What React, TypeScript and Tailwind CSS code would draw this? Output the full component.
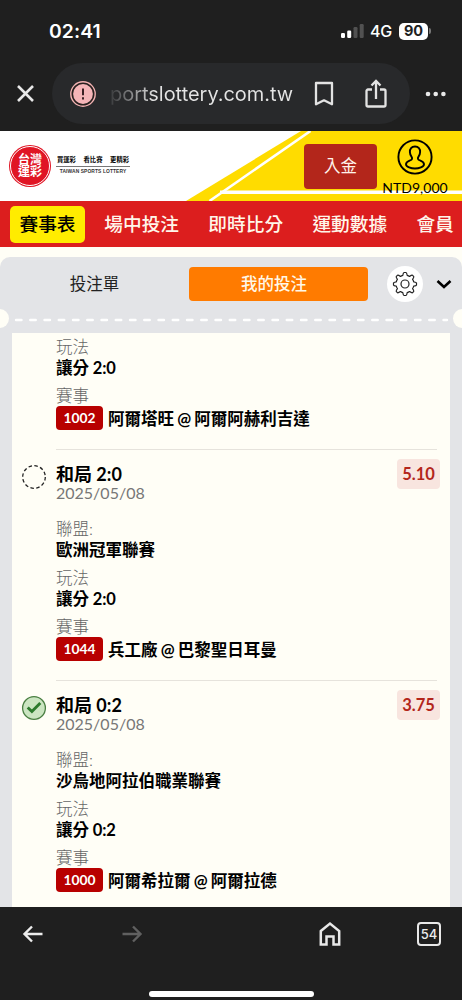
import React from "react";

type Bet = {
	id: string;
	pick?: string;
	date?: string;
	league?: string;
	handicap: string;
	match: string;
	odds?: string;
	won?: boolean;
};

const bets: Bet[] = [
	{ id: "1002", handicap: "讓分 2:0", match: "阿爾塔旺 @ 阿爾阿赫利吉達" },
	{
		id: "1044",
		pick: "和局 2:0",
		date: "2025/05/08",
		league: "歐洲冠軍聯賽",
		handicap: "讓分 2:0",
		match: "兵工廠 @ 巴黎聖日耳曼",
		odds: "5.10",
	},
	{
		id: "1000",
		pick: "和局 0:2",
		date: "2025/05/08",
		league: "沙烏地阿拉伯職業聯賽",
		handicap: "讓分 0:2",
		match: "阿爾希拉爾 @ 阿爾拉德",
		odds: "3.75",
		won: true,
	},
];

const navItems = ["場中投注", "即時比分", "運動數據", "會員"];

function StatusBar() {
	return (
		<div className="flex h-[62px] shrink-0 items-center justify-between pl-[49px] pr-[31px] font-['Inter','Liberation_Sans',sans-serif] text-white">
			<span className="pt-px text-[19.3px] font-semibold leading-none tracking-[0.1px]">02:41</span>
			<div className="flex items-center">
				<svg width="24" height="16" viewBox="0 0 24 16">
					<rect x="0" y="10" width="4" height="5" rx="1.2" fill="#fff" />
					<rect x="6.2" y="7.5" width="4" height="7.5" rx="1.2" fill="#fff" />
					<rect x="12.5" y="4" width="4" height="11" rx="1.2" fill="#515151" />
					<rect x="18.7" y="1" width="4" height="14" rx="1.2" fill="#515151" />
				</svg>
				<span className="ml-[5px] w-[22px] text-[16px] font-medium leading-none tracking-[-0.3px]">4G</span>
				<span className="ml-[7px] flex h-[17px] w-[29px] items-center justify-center rounded-[5px] bg-white text-[14.5px] font-bold leading-none text-[#1f1f1f]">
					90
				</span>
				<span className="ml-px h-[6px] w-[2px] rounded-r-full bg-[#777]" />
			</div>
		</div>
	);
}

function AddressBar() {
	return (
		<div className="flex h-[69px] shrink-0 items-start">
			<svg className="ml-[16px] mt-[22px]" width="19" height="19" viewBox="0 0 19 19" stroke="#e8e8e8" strokeWidth="2.6">
				<path d="M2 2l15 15M17 2L2 17" />
			</svg>
			<div className="ml-[17px] mt-px flex h-[61px] w-[358px] items-center rounded-full bg-[#28292b]">
				<svg className="ml-[18px]" width="26" height="26" viewBox="0 0 26 26">
					<circle cx="13" cy="13" r="12.2" fill="#28201f" stroke="#f3b3b3" strokeWidth="1.4" />
					<circle cx="13" cy="13" r="9.9" fill="#f5b5b8" />
					<path d="M13 7.5v6.7M13 16.3v2.2" stroke="#3a2023" strokeWidth="2" />
				</svg>
				<span className="ml-[14px] w-[185px] whitespace-nowrap bg-gradient-to-r from-[#3a3b3d] via-[#e4e4e4] via-[24%] to-[#e4e4e4] bg-clip-text font-['Inter','Liberation_Sans',sans-serif] text-[20px] leading-[28px] tracking-[-0.03px] text-transparent">
					portslottery.com.tw
				</span>
				<svg className="ml-[19px]" width="20" height="26" viewBox="0 0 20 26" fill="none" stroke="#e3e3e3" strokeWidth="2.3">
					<path d="M2 2h16v21.3l-8-4-8 4z" strokeLinejoin="round" />
				</svg>
				<svg className="ml-[31px]" width="22" height="30" viewBox="0 0 22 30" fill="none" stroke="#e3e3e3" strokeWidth="2.3">
					<path d="M7 10.5H3a1.5 1.5 0 0 0-1.5 1.5v14A1.5 1.5 0 0 0 3 27.5h16a1.5 1.5 0 0 0 1.5-1.5V12a1.5 1.5 0 0 0-1.5-1.5h-4M11 20V2.5M6.5 6.5L11 2l4.5 4.5" />
				</svg>
			</div>
			<svg className="ml-[15px] mt-[29px]" width="21" height="6" viewBox="0 0 21 6" fill="#e8e8e8">
				<circle cx="3" cy="3" r="2.3" />
				<circle cx="10.7" cy="3" r="2.3" />
				<circle cx="18.4" cy="3" r="2.3" />
			</svg>
		</div>
	);
}

function SiteHeader() {
	return (
		<header className="relative flex h-[70px] shrink-0 bg-white">
			<svg className="absolute inset-0" width="462" height="70" viewBox="0 0 462 70">
				<path d="M301 0H462V70H186z" fill="#ffdc00" />
				<path d="M310.5 0L209.5 70" stroke="#fff" strokeWidth="2.6" />
				<path d="M220 61.3H462" stroke="#fff" strokeWidth="3.4" />
			</svg>
			<div className="relative ml-[9px] mt-[14px] flex size-[42px] shrink-0 items-center justify-center rounded-full bg-[#e01524] p-[1px]">
				<div className="flex size-[40px] items-center justify-center rounded-full border border-white text-center text-[12px] font-bold leading-[12px] text-white">
					<span>
						台灣
						<br />
						運彩
					</span>
				</div>
			</div>
			<div className="relative ml-[5px] mt-[23px] w-[74px] text-center text-black">
				<div className="flex justify-between whitespace-nowrap border-b border-[#777] px-px pb-px text-[6.3px] font-bold leading-[11px]">
					<span>買運彩</span>
					<span>看比賽</span>
					<span>更精彩</span>
				</div>
				<div className="mt-[2px] whitespace-nowrap font-['Liberation_Sans',sans-serif] text-[4.9px] font-bold leading-[6px] tracking-[0.1px] text-[#333]">
					TAIWAN SPORTS LOTTERY
				</div>
			</div>
			<button className="relative ml-auto mt-[13px] h-[45px] w-[73px] rounded-[4px] bg-[#b3261b] text-[16.5px] text-[#fff3ea]">
				入金
			</button>
			<div className="relative ml-[5px] mr-[14px] flex w-[66px] flex-col items-center pt-[8px] text-black">
				<svg width="36" height="36" viewBox="0 0 36 36" fill="none" stroke="currentColor" strokeWidth="1.9">
					<circle cx="18" cy="18" r="16.6" />
					<path d="M18 7.5c-3.5 0-5.3 2.5-5.1 5.6.1 2.1.7 3.6 1.7 4.8.8 1 .6 2.5-.6 3.1-2 1-5 1.3-5 4.3 0 2.6 5.2 4.2 9 4.2s9-1.6 9-4.2c0-3-3-3.3-5-4.3-1.2-.6-1.4-2.1-.6-3.1 1-1.2 1.6-2.7 1.7-4.8.2-3.1-1.6-5.6-5.1-5.6z" />
				</svg>
				<span className="mt-[4px] font-['Lato',sans-serif] text-[14px] leading-[17px]">NTD9,000</span>
			</div>
		</header>
	);
}

function StatusIcon({ won }: { won?: boolean }) {
	if (won) {
		return (
			<svg width="26" height="26" viewBox="0 0 26 26" fill="none">
				<circle cx="13" cy="13" r="11.4" fill="#cbe5c1" stroke="#4a7f42" strokeWidth="1.3" />
				<path d="M6.7 12.5l4.2 4L19.3 8" stroke="#2c7a2c" strokeWidth="2.9" />
			</svg>
		);
	}
	return (
		<svg width="26" height="26" viewBox="0 0 26 26" fill="none">
			<circle cx="13" cy="13" r="11.3" stroke="#222" strokeWidth="1.3" strokeDasharray="3.5 2.417" />
		</svg>
	);
}

function BetItem({ bet }: { bet: Bet }) {
	return (
		<li className="flex pl-[9px] pr-[13px]">
			<div className="w-[35px] shrink-0 pt-[15px]">{bet.pick && <StatusIcon won={bet.won} />}</div>
			<div className={bet.pick ? "h-[231px] flex-1 border-t border-[#e6e3dc] pt-[14px]" : "h-[116px] flex-1 pt-[4px]"}>
				{bet.pick && (
					<>
						<div className="relative flex justify-between">
							<div className="text-[18px] font-bold leading-[20px]">{bet.pick}</div>
							<span className="absolute -right-[3px] -top-[5px] flex h-[30px] w-[43px] items-center justify-center rounded-[4px] bg-[#f8e5df] pt-px text-[16.5px] font-bold text-[#b3261b]">
								{bet.odds}
							</span>
						</div>
						<div className="-mt-px text-[16px] leading-[20px] text-[#777]">{bet.date}</div>
						<div className="mt-[16px] text-[16.5px] font-light leading-[21px] text-[#666]">聯盟:</div>
						<div className="mb-[8px] text-[16.5px] font-bold leading-[20px]">{bet.league}</div>
					</>
				)}
				<div className="text-[16.5px] font-light leading-[21px] text-[#666]">玩法</div>
				<div className="text-[16.5px] font-bold leading-[20px] tracking-[-0.1px]">{bet.handicap}</div>
				<div className="mt-[8px] text-[16.5px] font-light leading-[20px] text-[#666]">賽事</div>
				<div className="flex h-[24px] items-center">
					<span className="flex h-[24px] w-[47px] items-center justify-center rounded-[4px] bg-[#b80000] text-[13.8px] font-bold text-white">
						{bet.id}
					</span>
					<span className="ml-[5px] whitespace-nowrap pt-px text-[16.5px] font-bold leading-[20px] [word-spacing:-0.8px]">
						{bet.match}
					</span>
				</div>
			</div>
		</li>
	);
}

function BetSlip() {
	return (
		<section className="mt-[10px] flex min-h-0 flex-1 flex-col rounded-t-[10px] bg-[#e3e4e7]">
			<div className="flex h-[54px] shrink-0 items-center">
				<button className="w-[189px] text-[16.5px] text-[#222]">投注單</button>
				<button className="h-[34px] w-[179px] rounded-[4px] bg-[#ff7b00] pr-[9px] text-[16.5px] font-medium text-[#fff8e8]">
					我的投注
				</button>
				<span className="ml-[19px] flex size-[36px] items-center justify-center rounded-full bg-white">
					<svg width="26" height="26" viewBox="0 0 26 26" fill="none" stroke="#222" strokeWidth="1.2" strokeLinejoin="round">
						<path d="M10.8 4.3Q11.2 1.7 12 1.5H14Q14.8 1.7 15.2 4.3Q16.5 4.6 17.6 5.4Q19.7 3.9 20.4 4.2L21.8 5.6Q22.1 6.3 20.6 8.4Q21.4 9.5 21.7 10.8Q24.3 11.2 24.5 12V14Q24.3 14.8 21.7 15.2Q21.4 16.5 20.6 17.6Q22.1 19.7 21.8 20.4L20.4 21.8Q19.7 22.1 17.6 20.6Q16.5 21.4 15.2 21.7Q14.8 24.3 14 24.5H12Q11.2 24.3 10.8 21.7Q9.5 21.4 8.4 20.6Q6.3 22.1 5.6 21.8L4.2 20.4Q3.9 19.7 5.4 17.6Q4.6 16.5 4.3 15.2Q1.7 14.8 1.5 14V12Q1.7 11.2 4.3 10.8Q4.6 9.5 5.4 8.4Q3.9 6.3 4.2 5.6L5.6 4.2Q6.3 3.9 8.4 5.4Q9.5 4.6 10.8 4.3Z" />
						<circle cx="13" cy="13" r="4" />
					</svg>
				</span>
				<svg className="ml-[13px]" width="16" height="12" viewBox="0 0 16 12" fill="none" stroke="#000" strokeWidth="2.6">
					<path d="M1.5 3l6.5 6 6.5-6" />
				</svg>
			</div>
			<div className="flex h-[22px] shrink-0 items-start">
				<span className="-ml-[10px] mt-[-2px] size-[19px] shrink-0 rounded-full bg-[#fffef6]" />
				<svg className="ml-[5px] shrink-0" width="439" height="20" viewBox="0 0 439 20">
					<path d="M2 9H433" stroke="#fff" strokeWidth="2.4" strokeLinecap="round" strokeDasharray="5.5 8.75" />
				</svg>
				<span className="mt-[-2px] size-[19px] shrink-0 rounded-full bg-[#fffef6]" />
			</div>
			<ul className="mx-[12px] min-h-0 flex-1 overflow-hidden bg-[#fffef6] text-black">
				{bets.map((bet) => (
					<BetItem key={bet.id} bet={bet} />
				))}
			</ul>
		</section>
	);
}

function BottomBar() {
	return (
		<footer className="h-[93px] shrink-0 bg-[#1f1f1f]">
			<div className="flex h-[53px] items-center pl-[22px] pr-[21px]">
				<svg width="22" height="18" viewBox="0 0 22 18" fill="none" stroke="#ececec" strokeWidth="2.4">
					<path d="M20.5 9H3M10 1.5L2.5 9l7.5 7.5" />
				</svg>
				<svg className="ml-[77px]" width="22" height="18" viewBox="0 0 22 18" fill="none" stroke="#606060" strokeWidth="2.4">
					<path d="M1.5 9H19M12 1.5L19.5 9 12 16.5" />
				</svg>
				<svg className="ml-auto" width="24" height="26" viewBox="0 0 24 26" fill="none" stroke="#e8e8e8" strokeWidth="2.5">
					<path d="M2.8 10L12 2.5l9.2 7.5v13.5h-5.700v-8h-7v8H2.8z" />
				</svg>
				<span className="ml-[75px] flex size-[24px] items-center justify-center rounded-[4px] border-2 border-[#e8e8e8] pt-px font-['Inter','Liberation_Sans',sans-serif] text-[13px] font-medium leading-none text-[#ececec]">
					54
				</span>
			</div>
			<div className="mx-auto mt-[31px] h-[6px] w-[165px] rounded-full bg-white" />
		</footer>
	);
}

export default function App() {
	return (
		<div className="flex h-[1000px] w-[462px] flex-col overflow-hidden bg-[#1f1f1f] font-['Lato','Noto_Sans_CJK_TC',sans-serif]">
			<StatusBar />
			<AddressBar />
			<main className="flex min-h-0 flex-1 flex-col bg-[#fffef6]">
				<SiteHeader />
				<nav className="flex h-[46px] shrink-0 items-center gap-[29.3px] overflow-hidden whitespace-nowrap bg-[#dc1e1e] pl-[10px] text-[18.7px] font-medium text-[#fff6ea]">
					<span className="-mr-[10px] flex h-[37px] w-[75px] shrink-0 items-center justify-center rounded-[5px] bg-[#ffec00] text-black">賽事表</span>
					{navItems.map((item) => (
						<span key={item} className="shrink-0">
							{item}
						</span>
					))}
				</nav>
				<BetSlip />
			</main>
			<BottomBar />
		</div>
	);
}
